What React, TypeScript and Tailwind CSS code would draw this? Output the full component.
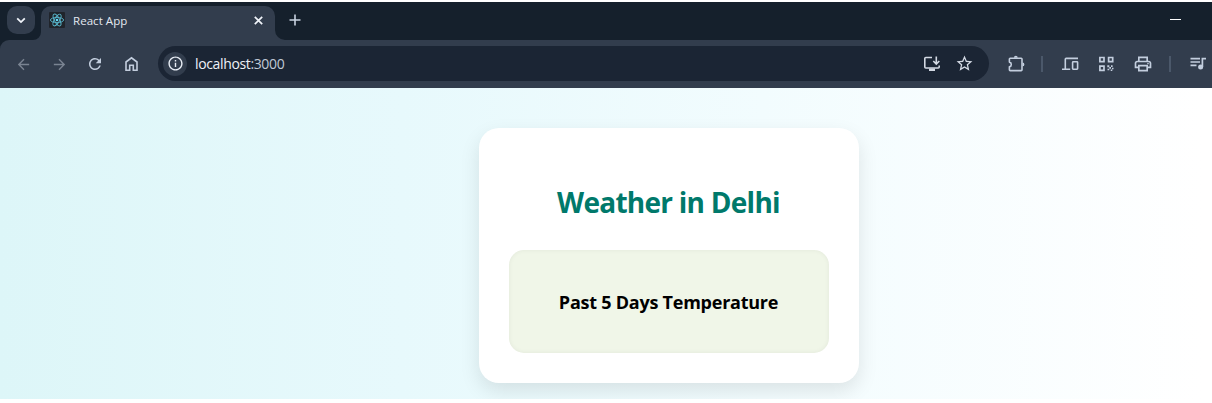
import type { ReactNode } from "react";
import {
  MdArrowBack,
  MdArrowForward,
  MdInfoOutline,
  MdOutlinePrint,
  MdRefresh,
  MdStarBorder,
} from "react-icons/md";

function Slot({ children, dim = false }: { children: ReactNode; dim?: boolean }) {
  return (
    <span
      className={
        dim
          ? "flex w-9 shrink-0 items-center justify-center text-[#7a8492]"
          : "flex w-9 shrink-0 items-center justify-center text-[#c3cede]"
      }
    >
      {children}
    </span>
  );
}

function ReactLogo() {
  return (
    <svg width="16" height="16" viewBox="0 0 16 16" className="shrink-0">
      <rect width="16" height="16" rx="1" fill="#20242b" />
      <g fill="none" stroke="#58b6cc" strokeWidth="0.9">
        <ellipse cx="8" cy="8" rx="6.6" ry="2.6" />
        <ellipse cx="8" cy="8" rx="6.6" ry="2.6" transform="rotate(60 8 8)" />
        <ellipse cx="8" cy="8" rx="6.6" ry="2.6" transform="rotate(120 8 8)" />
      </g>
      <circle cx="8" cy="8" r="1.3" fill="#61dafb" />
    </svg>
  );
}

function HomeIcon() {
  return (
    <svg width="18" height="18" viewBox="0 0 18 18" fill="none" stroke="currentColor" strokeWidth="1.6">
      <path d="M4 15.2V7L9.5 2.8L15 7v8.2h-3.7v-5H7.7v5z" />
    </svg>
  );
}

function InstallIcon() {
  return (
    <svg width="18" height="18" viewBox="0 0 18 18" fill="none" stroke="currentColor" strokeWidth="1.6">
      <path d="M9 2.5H2.8Q1.8 2.5 1.8 3.5V12Q1.8 13 2.8 13H15.2Q16.2 13 16.2 12V10.5" />
      <path d="M13.3 1.6V8.6M10.3 6L13.3 9L16.3 6" />
      <path d="M6 13.5H12V16H6z" fill="currentColor" stroke="none" />
    </svg>
  );
}

function ExtensionIcon() {
  return (
    <svg width="20" height="20" viewBox="0 0 20 20">
      <path
        d="M4.2 4.2h11Q16 4.2 16 5v10.8Q16 16.6 15.2 16.6h-11Q3.4 16.6 3.4 15.8V12.8a2.4 2.4 0 0 0 0-4.7V5Q3.4 4.2 4.2 4.2z"
        fill="none"
        stroke="currentColor"
        strokeWidth="1.6"
        strokeLinejoin="round"
      />
      <path d="M7.9 3.7a1.9 1.9 0 0 1 3.8 0zM16.5 8.5a1.9 1.9 0 0 1 0 3.8z" fill="currentColor" />
    </svg>
  );
}

function DevicesIcon() {
  return (
    <svg width="18" height="18" viewBox="0 0 18 18" fill="none" stroke="currentColor" strokeWidth="1.6">
      <path d="M17 3.4H5.2Q4.3 3.4 4.3 4.3V13.5M1 14.2H9.2" />
      <rect x="11.6" y="6.8" width="5" height="7.4" rx="0.6" />
    </svg>
  );
}

function QrIcon() {
  return (
    <svg width="16" height="16" viewBox="0 0 16 16" fill="none" stroke="currentColor" strokeWidth="1.7">
      <path d="M1.9 1.5H6V5.6H1.9zM10.6 1.5h4.1v4.1h-4.1zM1.9 10.2H6v4.1H1.9z" />
      <path
        d="M9.3 9.2h2v2H9.3zM13 9.2h1.6v1.8H13zM11.3 11H13v1.7H11.3zM14 11.8h1.5v1.5H14zM9.5 12.7h1.8v1.5H9.5zM12.7 13.5h1.6V15h-1.6z"
        fill="currentColor"
        stroke="none"
      />
    </svg>
  );
}

function QueueIcon() {
  return (
    <svg width="18" height="18" viewBox="0 0 18 18" fill="none" stroke="currentColor" strokeWidth="1.7">
      <path d="M1.5 3.6H11M1.5 7H11M1.5 10.4H7.5M13.4 12V3.6H17" />
      <circle cx="11.6" cy="12.1" r="2.5" fill="currentColor" stroke="none" />
    </svg>
  );
}

function TabStrip() {
  return (
    <div className="flex h-[38px] bg-[#15202c]">
      <div className="ml-[7px] mt-1 flex h-7 w-7 items-center justify-center rounded-[10px] bg-[#323d4d]">
        <svg width="10" height="7" viewBox="0 0 10 7" fill="none" stroke="#f0f4fa" strokeWidth="1.8">
          <path d="M1.2 1.4L5 5.1L8.8 1.4" />
        </svg>
      </div>
      <svg width="8" height="8" viewBox="0 0 8 8" className="-ml-0.5 shrink-0 self-end">
        <path d="M8 0V8H0A8 8 0 0 0 8 0z" fill="#323d4d" />
      </svg>
      <div className="mt-1 flex w-[234px] items-start rounded-t-[10px] bg-[#323d4d] pl-2 pt-1.5">
        <ReactLogo />
        <span className="ml-2 mt-px font-['Open_Sans',sans-serif] text-[11.5px] leading-4 tracking-[0.05px] text-[#e4e9f1]">
          React App
        </span>
        <svg width="9" height="9" viewBox="0 0 9 9" className="ml-auto mr-3 mt-1" stroke="#f0f4fa" strokeWidth="1.7">
          <path d="M0.8 0.8L8.2 8.2M8.2 0.8L0.8 8.2" />
        </svg>
      </div>
      <svg width="10" height="10" viewBox="0 0 8 8" className="shrink-0 self-end">
        <path d="M0 0V8H8A8 8 0 0 1 0 0z" fill="#323d4d" />
      </svg>
      <svg width="12" height="12" viewBox="0 0 12 12" className="ml-1 mt-3 shrink-0" stroke="#c9d3e1" strokeWidth="1.6">
        <path d="M6 0.5V11.5M0.5 6H11.5" />
      </svg>
      <span className="ml-auto mr-[31px] mt-[17px] h-px w-[11px] bg-white" />
    </div>
  );
}

function Toolbar() {
  return (
    <div className="bg-[#15202c]">
      <div className="flex h-12 items-center overflow-hidden rounded-tl-[9px] bg-[#323d4d] pl-[5px]">
        <Slot dim><MdArrowBack size={17} /></Slot>
        <Slot dim><MdArrowForward size={17} /></Slot>
        <Slot><MdRefresh size={18} /></Slot>
        <Slot><HomeIcon /></Slot>
        <div className="mb-px ml-[9px] flex h-[35px] w-[831px] shrink-0 items-center rounded-full bg-[#1b2534] pl-[5px]">
          <span className="flex h-6 w-6 items-center justify-center rounded-full bg-[#323d4d] text-[#e8edf5]">
            <MdInfoOutline size={17} />
          </span>
          <span className="ml-2 font-['Open_Sans',sans-serif] text-[14px] leading-5 tracking-[-0.36px] text-[#eef2f8]">
            localhost<span className="text-[#c0c9d6]">:3000</span>
          </span>
          <span className="ml-auto mr-[15px] flex items-center gap-[14px] text-[#d3d9e3]">
            <InstallIcon />
            <MdStarBorder size={19} />
          </span>
        </div>
        <span className="ml-[9px]"><Slot><ExtensionIcon /></Slot></span>
        <span className="ml-[7px] h-4 w-0.5 shrink-0 bg-[#4b586a]" />
        <span className="ml-[9px]"><Slot><DevicesIcon /></Slot></span>
        <Slot><QrIcon /></Slot>
        <span className="ml-px"><Slot><MdOutlinePrint size={20} /></Slot></span>
        <span className="ml-2 h-4 w-0.5 shrink-0 bg-[#4b586a]" />
        <span className="ml-[9px]"><Slot><QueueIcon /></Slot></span>
      </div>
    </div>
  );
}

export default function App() {
  return (
    <div className="h-[403px] w-[1212px] overflow-hidden bg-white pt-0.5">
      <TabStrip />
      <Toolbar />
      <main className="h-[311px] overflow-hidden">
        <div className="flex h-full w-[1337px] items-start justify-center bg-[linear-gradient(to_right,#ddf6f8,#e7f9fc_30%,#f2fcfe_57%,#ffffff_90%)] pt-10 font-['Open_Sans',sans-serif]">
          <section className="h-[255px] w-[380px] rounded-[20px] bg-white px-[30px] pt-[54px] text-center shadow-[0_8px_20px_rgba(0,0,0,0.1)]">
            <h1 className="whitespace-nowrap text-[28px] font-bold leading-10 tracking-[-0.74px] text-[#00796b]">Weather in Delhi</h1>
            <div className="mt-7 flex h-[103px] items-center justify-center rounded-[15px] bg-[#f0f6e8] shadow-[inset_0_0_5px_rgba(0,0,0,0.06)]">
              <h2 className="mt-0.5 whitespace-nowrap text-[18px] font-bold tracking-[-0.24px] text-black">Past 5 Days Temperature</h2>
            </div>
          </section>
        </div>
      </main>
    </div>
  );
}
